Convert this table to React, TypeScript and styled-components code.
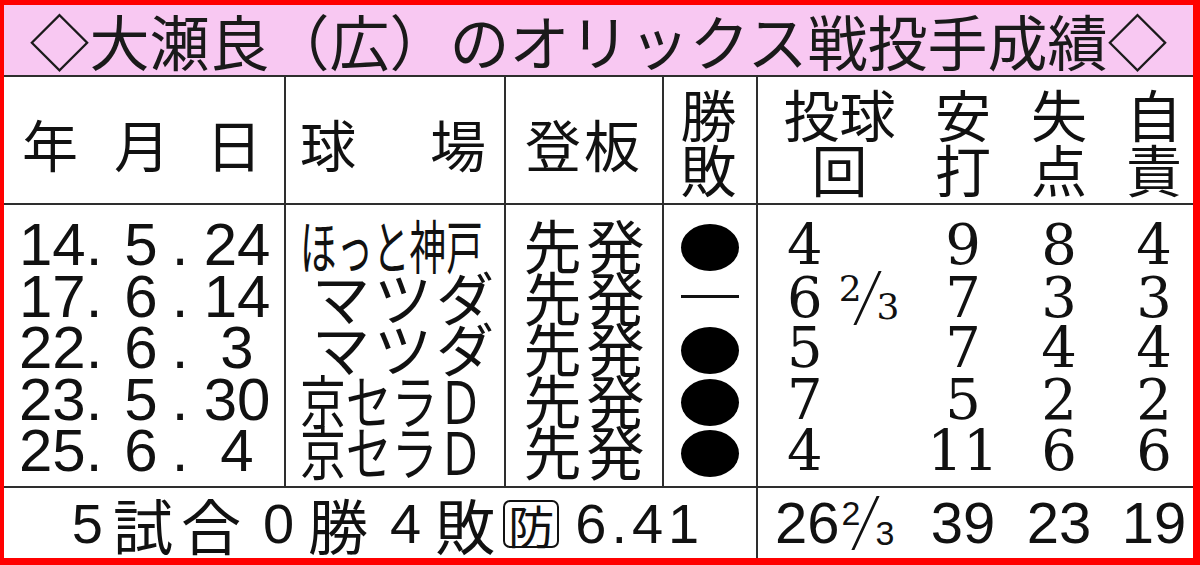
import React from 'react';
import styled, { createGlobalStyle } from 'styled-components';

const LINE = '#2e2e2e';
const PINK = '#f8c8f2';
const RED = '#ff0000';

const JP = `"Noto Sans CJK JP", "Noto Sans", sans-serif`;
const NUM = `"Liberation Sans", Arial, sans-serif`;
const SERIF_NUM = `"DejaVu Serif", "Liberation Serif", serif`;

const GlobalStyle = createGlobalStyle`
  html, body {
    margin: 0;
    padding: 0;
    background: #ffffff;
  }
  body {
    font-family: ${JP};
    color: #111;
  }
`;

interface Game {
  year: string;
  month: string;
  day: string;
  park: string;
  parkScale: number;
  parkSpacing: number;
  role: string;
  result: 'loss' | 'none';
  ip: string;
  twoThirds?: boolean;
  hits: number;
  runs: number;
  earned: number;
}

const games: Game[] = [
  { year: '14', month: '5', day: '24', park: 'ほっと神戸', parkScale: 0.63, parkSpacing: 0, role: '先発', result: 'loss', ip: '4', hits: 9, runs: 8, earned: 4 },
  { year: '17', month: '6', day: '14', park: 'マツダ', parkScale: 1, parkSpacing: 4, role: '先発', result: 'none', ip: '6', twoThirds: true, hits: 7, runs: 3, earned: 3 },
  { year: '22', month: '6', day: '3', park: 'マツダ', parkScale: 1, parkSpacing: 4, role: '先発', result: 'loss', ip: '5', hits: 7, runs: 4, earned: 4 },
  { year: '23', month: '5', day: '30', park: '京セラＤ', parkScale: 0.79, parkSpacing: 0, role: '先発', result: 'loss', ip: '7', hits: 5, runs: 2, earned: 2 },
  { year: '25', month: '6', day: '4', park: '京セラＤ', parkScale: 0.79, parkSpacing: 0, role: '先発', result: 'loss', ip: '4', hits: 11, runs: 6, earned: 6 },
];

const COLS = '280px 220px 158px 94px 437px';
const STAT_COLS = '163px 84px 108px 82px';
const ROW_H = '51.5px';

const Frame = styled.div`
  width: 1200px;
  height: 565px;
  box-sizing: border-box;
  border-style: solid;
  border-color: ${RED};
  border-width: 5px 7px 7px 4px;
  display: flex;
  flex-direction: column;
  background: #fff;
  overflow: hidden;
`;

const Title = styled.h1`
  margin: 0;
  height: 70px;
  flex: none;
  background: ${PINK};
  border-bottom: 2px solid ${LINE};
  display: flex;
  align-items: center;
  justify-content: center;
  font-family: ${JP};
  font-weight: 400;
  font-size: 60px;
  letter-spacing: 0;
  line-height: 1;
  white-space: nowrap;
  color: #1a1a1a;
`;

const HeaderRow = styled.div`
  display: grid;
  grid-template-columns: ${COLS};
  height: 126px;
  flex: none;
  border-bottom: 2px solid ${LINE};
`;

const HeadCell = styled.div<{ $first?: boolean }>`
  display: flex;
  align-items: center;
  border-left: ${(p) => (p.$first ? 'none' : `2px solid ${LINE}`)};
  font-size: 56px;
  line-height: 55px;
  font-family: ${JP};
`;

const Spread = styled.div<{ $pl: number; $pr: number }>`
  flex: 1;
  display: flex;
  justify-content: space-between;
  padding: 4px ${(p) => p.$pr}px 0 ${(p) => p.$pl}px;
`;

const Centered = styled.div<{ $pt?: number }>`
  flex: 1;
  display: flex;
  justify-content: center;
  text-align: center;
  padding-top: ${(p) => p.$pt ?? 0}px;
  letter-spacing: 3px;
`;

const StatHeads = styled.div`
  flex: 1;
  display: grid;
  grid-template-columns: ${STAT_COLS};
`;

const Stack = styled.div`
  display: flex;
  flex-direction: column;
  align-items: center;
`;

const Body = styled.div`
  display: grid;
  grid-template-columns: ${COLS};
  height: 281px;
  flex: none;
  border-bottom: 2px solid ${LINE};
`;

const Column = styled.div<{ $first?: boolean }>`
  border-left: ${(p) => (p.$first ? 'none' : `2px solid ${LINE}`)};
  padding-top: 14px;
  display: flex;
  flex-direction: column;
`;

const DateLine = styled.div`
  height: ${ROW_H};
  display: grid;
  grid-template-columns: 94px 56px 22px 92px;
  padding-left: 15px;
  align-items: center;
  font-family: ${NUM};
  font-size: 60px;
  line-height: ${ROW_H};
`;

const DatePart = styled.span<{ $align: 'left' | 'center' }>`
  text-align: ${(p) => p.$align};
`;

const ParkLine = styled.div`
  height: ${ROW_H};
  display: flex;
  align-items: center;
  padding-left: 14px;
  font-size: 58px;
  line-height: ${ROW_H};
  white-space: nowrap;
`;

const Park = styled.span<{ $scale: number; $spacing: number }>`
  display: inline-block;
  transform: scaleX(${(p) => p.$scale});
  transform-origin: left center;
  letter-spacing: ${(p) => p.$spacing}px;
  margin-left: ${(p) => (p.$spacing ? 12 : 0)}px;
`;

const RoleLine = styled.div`
  height: ${ROW_H};
  display: flex;
  align-items: center;
  justify-content: center;
  font-size: 58px;
  letter-spacing: 5px;
  padding-left: 5px;
  line-height: ${ROW_H};
`;

const MarkLine = styled.div`
  height: ${ROW_H};
  display: flex;
  align-items: center;
  justify-content: center;
`;

const LossMark = styled.span`
  width: 58px;
  height: 47px;
  border-radius: 50%;
  background: #000;
  margin-top: 6px;
`;

const NoDecision = styled.span`
  width: 58px;
  height: 3px;
  background: #111;
`;

const StatLine = styled.div`
  height: ${ROW_H};
  display: grid;
  grid-template-columns: ${STAT_COLS};
  align-items: center;
  font-family: ${SERIF_NUM};
  font-size: 56px;
  line-height: ${ROW_H};
`;

const IpCell = styled.span<{ $pl: number }>`
  display: flex;
  align-items: center;
  padding-left: ${(p) => p.$pl}px;
`;

const StatCell = styled.span`
  text-align: center;
`;

const Fraction = styled.span<{ $gap: number; $size: number }>`
  display: inline-flex;
  align-items: stretch;
  height: 54px;
  margin-left: ${(p) => p.$gap}px;
  font-size: ${(p) => p.$size}px;
  line-height: 1;
`;

const Num = styled.span`
  align-self: flex-start;
`;

const Den = styled.span`
  align-self: flex-end;
`;

const Slash = styled.span`
  width: 3px;
  height: 54px;
  background: #111;
  transform: skewX(-25deg);
  margin: 0 8px 0 4px;
`;

const Footer = styled.div`
  display: grid;
  grid-template-columns: 752px 437px;
  flex: 1;
`;

const FootCell = styled.div<{ $first?: boolean }>`
  border-left: ${(p) => (p.$first ? 'none' : `2px solid ${LINE}`)};
  display: flex;
  align-items: center;
`;

const Summary = styled.div`
  flex: 1;
  display: flex;
  align-items: center;
  justify-content: center;
  font-size: 60px;
  letter-spacing: 8px;
  line-height: 1;
  padding: 2px 0 0 6px;
`;

const Digit = styled.span<{ $mx: number; $ls?: number }>`
  font-family: ${NUM};
  font-size: 56px;
  font-weight: 400;
  letter-spacing: ${(p) => p.$ls ?? 0}px;
  margin: 0 ${(p) => p.$mx}px;
`;

const Boxed = styled.span`
  display: inline-flex;
  align-items: center;
  justify-content: center;
  width: 52px;
  height: 44px;
  border: 2.5px solid #111;
  border-radius: 7px;
  font-size: 46px;
  letter-spacing: 0;
  margin: 0 16px 0 0;
`;

const TotalLine = styled.div`
  flex: 1;
  display: grid;
  grid-template-columns: ${STAT_COLS};
  align-items: center;
  font-family: ${NUM};
  font-size: 58px;
  line-height: 1;
`;

const TwoThirds: React.FC<{ gap: number; size: number }> = ({ gap, size }) => (
  <Fraction $gap={gap} $size={size}>
    <Num>2</Num>
    <Slash />
    <Den>3</Den>
  </Fraction>
);

const App: React.FC = () => {
  return (
    <>
      <GlobalStyle />
      <Frame>
        <Title>◇大瀬良（広）のオリックス戦投手成績◇</Title>

        <HeaderRow>
          <HeadCell $first>
            <Spread $pl={18} $pr={22}>
              <span>年</span>
              <span>月</span>
              <span>日</span>
            </Spread>
          </HeadCell>
          <HeadCell>
            <Spread $pl={14} $pr={18}>
              <span>球</span>
              <span>場</span>
            </Spread>
          </HeadCell>
          <HeadCell>
            <Centered $pt={4}>登板</Centered>
          </HeadCell>
          <HeadCell>
            <Centered>
              <Stack>
                <span>勝</span>
                <span>敗</span>
              </Stack>
            </Centered>
          </HeadCell>
          <HeadCell>
            <StatHeads>
              <Stack>
                <span>投球</span>
                <span>回</span>
              </Stack>
              <Stack>
                <span>安</span>
                <span>打</span>
              </Stack>
              <Stack>
                <span>失</span>
                <span>点</span>
              </Stack>
              <Stack>
                <span>自</span>
                <span>責</span>
              </Stack>
            </StatHeads>
          </HeadCell>
        </HeaderRow>

        <Body>
          <Column $first>
            {games.map((g, i) => (
              <DateLine key={i}>
                <DatePart $align="left">{g.year}.</DatePart>
                <DatePart $align="center">{g.month}</DatePart>
                <DatePart $align="center">.</DatePart>
                <DatePart $align="center">{g.day}</DatePart>
              </DateLine>
            ))}
          </Column>
          <Column>
            {games.map((g, i) => (
              <ParkLine key={i}>
                <Park $scale={g.parkScale} $spacing={g.parkSpacing}>
                  {g.park}
                </Park>
              </ParkLine>
            ))}
          </Column>
          <Column>
            {games.map((g, i) => (
              <RoleLine key={i}>{g.role}</RoleLine>
            ))}
          </Column>
          <Column>
            {games.map((g, i) => (
              <MarkLine key={i}>{g.result === 'loss' ? <LossMark /> : <NoDecision />}</MarkLine>
            ))}
          </Column>
          <Column>
            {games.map((g, i) => (
              <StatLine key={i}>
                <IpCell $pl={29}>
                  {g.ip}
                  {g.twoThirds && <TwoThirds gap={16} size={36} />}
                </IpCell>
                <StatCell>{g.hits}</StatCell>
                <StatCell>{g.runs}</StatCell>
                <StatCell>{g.earned}</StatCell>
              </StatLine>
            ))}
          </Column>
        </Body>

        <Footer>
          <FootCell $first>
            <Summary>
              <Digit $mx={10}>5</Digit>試合<Digit $mx={14}>0</Digit>勝<Digit $mx={14}>4</Digit>敗
              <Boxed>防</Boxed>
              <Digit $mx={0} $ls={5}>6.41</Digit>
            </Summary>
          </FootCell>
          <FootCell>
            <TotalLine>
              <IpCell $pl={17}>
                26
                <TwoThirds gap={2} size={34} />
              </IpCell>
              <StatCell>39</StatCell>
              <StatCell>23</StatCell>
              <StatCell>19</StatCell>
            </TotalLine>
          </FootCell>
        </Footer>
      </Frame>
    </>
  );
};

export default App;
